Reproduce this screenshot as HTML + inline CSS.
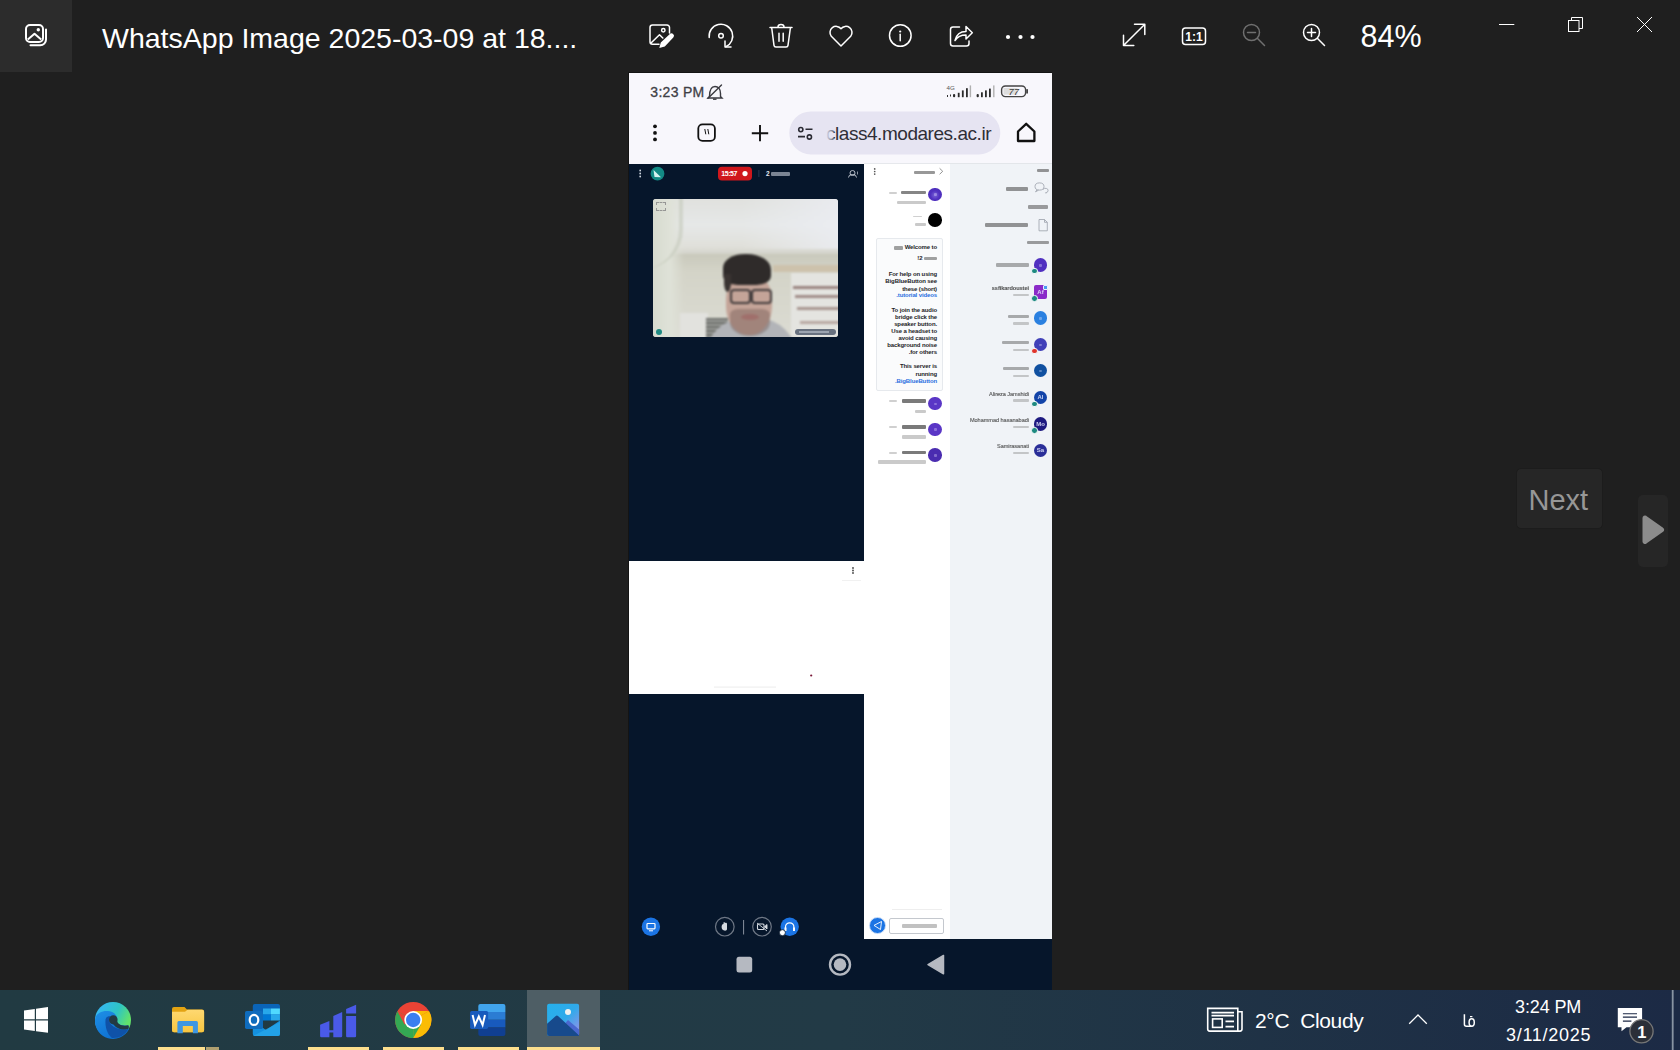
<!DOCTYPE html>
<html><head><meta charset="utf-8">
<style>
*{margin:0;padding:0;box-sizing:border-box}
html,body{width:1680px;height:1050px;overflow:hidden;background:#1f1f1f;font-family:"Liberation Sans",sans-serif}
.a{position:absolute}
#tile{left:0;top:0;width:72px;height:72px;background:#2c2c2c}
#title{left:102px;top:19.5px;color:#fff;font-size:28.5px;white-space:nowrap;line-height:36px}
svg.ic{position:absolute;overflow:visible}
.sq{display:inline-block;transform-origin:100% 50%}
.ib{display:inline-block;height:3.4px;background:#333;opacity:.45;border-radius:1px;vertical-align:-0.3px;filter:blur(0.35px)}
#phone{left:629px;top:73px;width:423px;height:917px;background:#06162b;overflow:hidden}
#taskbar{left:0;top:990px;width:1680px;height:60px;background:linear-gradient(90deg,#213a42 0%,#223a46 50%,#1c2a45 100%)}
</style></head><body>
<div id="tile" class="a"></div>
<svg class="ic" style="left:0;top:0" width="72" height="72" viewBox="0 0 72 72">
 <g fill="none" stroke="#fff" stroke-width="2">
  <rect x="26" y="25" width="17" height="17" rx="4"/>
  <path d="M27.8 39.6 L34.5 33.8 L41.2 39.6" stroke-linejoin="round"/>
  <path d="M46 29.5 V39.5 a5.8 5.8 0 0 1 -5.8 5.8 H30.5" stroke-linecap="round"/>
 </g>
 <circle cx="38.3" cy="29.7" r="1.7" fill="#fff"/>
</svg>
<div id="title" class="a">WhatsApp Image 2025-03-09 at 18....</div>


<svg class="ic" style="left:0;top:0" width="1680" height="72" viewBox="0 0 1680 72">
 <g fill="none" stroke="#fff" stroke-width="1.5" stroke-linecap="round" stroke-linejoin="round">
  <!-- edit -->
  <path d="M659 44.3 H652.5 a2.5 2.5 0 0 1 -2.5 -2.5 V27.5 a2.5 2.5 0 0 1 2.5 -2.5 H667 a2.5 2.5 0 0 1 2.5 2.5 V33"/>
  <path d="M651 43 L659.5 34.8 L662.8 38"/>
  <circle cx="663.3" cy="30.3" r="1.7"/>
  <!-- rotate -->
  <path d="M709.2 37.5 A11.8 11.8 0 1 1 725.8 46.8"/>
  <path d="M725 41 V46.9 H731"/>
  <circle cx="721" cy="35.8" r="2.3"/>
  <!-- trash -->
  <path d="M770 27.6 H792"/>
  <path d="M778 27 a3 2.5 0 0 1 6 0"/>
  <path d="M771.8 28.5 L774 45.3 a2 2 0 0 0 2 1.8 H786 a2 2 0 0 0 2 -1.8 L790.3 28.5"/>
  <path d="M779 33.3 V41.3 M783.2 33.3 V41.3"/>
  <!-- heart -->
  <path d="M841 46 L831.3 36.3 A5.6 5.6 0 0 1 841 28.7 A5.6 5.6 0 0 1 850.7 36.3 Z"/>
  <!-- info -->
  <circle cx="900.3" cy="35.5" r="10.8"/>
  <path d="M900.2 34.3 V40.8"/>
  <!-- share -->
  <path d="M959.5 27 H953 a2.5 2.5 0 0 0 -2.5 2.5 V43.5 a2.5 2.5 0 0 0 2.5 2.5 H966.5 a2.5 2.5 0 0 0 2.5 -2.5 V41"/>
  <path d="M955 40.5 C956.5 34 960.5 31.5 966 31.5 V26.5 L972.3 32.8 L966 39 V35 C961 35 957.5 36.5 955 40.5 Z"/>
  <!-- expand -->
  <path d="M1123.5 45.5 L1144.8 24.3 M1134.5 24.3 H1144.8 V34.6 M1123.5 35.2 V45.5 H1133.8"/>
  <!-- 1:1 -->
  <rect x="1182.5" y="28" width="23" height="16.5" rx="3"/>
  <!-- zoom in -->
  <circle cx="1311.5" cy="32.5" r="8"/>
  <path d="M1317.3 38.3 L1324.5 45.5 M1307.5 32.5 H1315.5 M1311.5 28.5 V36.5"/>
 </g>
 <g fill="none" stroke="#6f6f6f" stroke-width="1.5" stroke-linecap="round">
  <circle cx="1251.5" cy="32.5" r="8"/>
  <path d="M1257.3 38.3 L1264.5 45.5 M1247.5 32.5 H1255.5"/>
 </g>
 <g fill="#fff">
  <path d="M659.3 48 L660.8 42.6 L669.6 34.2 A2.5 2.5 0 0 1 673.3 37.6 L664.8 46.4 Z"/>
  <circle cx="900.2" cy="31.5" r="1.1"/>
  <circle cx="1008" cy="37" r="2.1"/><circle cx="1020.5" cy="37" r="2.1"/><circle cx="1032.5" cy="37" r="2.1"/>
 </g>
 <text x="1194" y="41.3" fill="#fff" font-size="12" font-weight="bold" text-anchor="middle" font-family="Liberation Sans">1:1</text>
 <g fill="none" stroke="#fff" stroke-width="1">
  <path d="M1499 24.5 H1514.3"/>
  <path d="M1571.5 21 V17.5 H1582.5 V28.5 H1579"/>
  <rect x="1568.5" y="20.5" width="10.5" height="11"/>
  <path d="M1637 17 L1652 32 M1652 17 L1637 32"/>
 </g>
</svg>
<div class="a" style="left:1360.5px;top:17.5px;color:#fff;font-size:30.5px;line-height:36px">84%</div>

<div class="a" style="left:628px;top:72px;width:424px;height:1px;background:#141414"></div>
<div class="a" style="left:628px;top:72px;width:1px;height:918px;background:#141414"></div>
<div id="phone" class="a">
 <!-- status + browser bar -->
 <div class="a" style="left:0;top:0;width:423px;height:91px;background:#f8f7fc"></div>
 <div class="a" style="left:21.3px;top:10px;font-size:14px;line-height:18px;color:#404046;letter-spacing:0.3px;-webkit-text-stroke:0.3px #404046">3:23 PM</div>
 <svg class="ic" style="left:0;top:0" width="423" height="91" viewBox="0 0 423 91">
  <g fill="none" stroke="#3a3a40" stroke-width="1.4" stroke-linecap="round">
   <path d="M80.5 23.5 C80.5 16 83.5 13.5 86 13.5 C89 13.5 91.5 16 91.5 20.5 V23.5 L93 25 H79 Z" />
   <path d="M79 25.3 L92.5 12"/>
  </g>
  <rect x="84" y="25.5" width="3.5" height="1.4" fill="#3a3a40"/>
  <!-- 4G signal -->
  <text x="317.5" y="16.5" font-size="6.2" fill="#555" font-family="Liberation Sans">4G</text>
  <path d="M318.5 22 V24 M321.5 21.5 V23.5" stroke="#333" stroke-width="1"/>
  <g fill="#2b2b2b">
   <rect x="324" y="21" width="2.2" height="3.2" rx="1"/><rect x="328.8" y="19.8" width="1.8" height="4.4"/><rect x="332.9" y="17.4" width="1.8" height="6.8"/><rect x="337" y="15.2" width="1.8" height="9"/>
   <rect x="347.6" y="21" width="2.2" height="3.2" rx="1"/><rect x="352" y="19.3" width="1.8" height="4.9"/><rect x="356" y="17.4" width="1.8" height="6.8"/><rect x="360" y="15.6" width="1.8" height="8.6"/>
  </g>
  <rect x="340.7" y="12.4" width="1.4" height="11.8" fill="#b0b0b0"/>
  <rect x="364.1" y="12.4" width="1.4" height="11.8" fill="#b0b0b0"/>
  <rect x="372.6" y="13" width="24" height="10.6" rx="3.8" fill="none" stroke="#444" stroke-width="1.4"/>
  <rect x="374.5" y="15" width="14" height="6.6" fill="#ddd"/>
  <rect x="397.2" y="16.2" width="1.8" height="4.3" fill="#444"/>
  <text x="384.8" y="21.8" font-size="9.5" fill="#3a3a3a" font-style="italic" text-anchor="middle" font-family="Liberation Sans">77</text>
  <!-- browser toolbar -->
  <g fill="#111">
   <circle cx="26" cy="53.3" r="1.9"/><circle cx="26" cy="59.9" r="1.9"/><circle cx="26" cy="66.4" r="1.9"/>
  </g>
  <rect x="69.3" y="51.3" width="16.6" height="16.6" rx="4.2" fill="none" stroke="#111" stroke-width="1.8"/>
  <path d="M75.8 56 L76.8 61.3 M78.8 56 L79.8 61.3" stroke="#111" stroke-width="1" fill="none"/>
  <path d="M131 52 V68.3 M122.8 60.2 H139.2" stroke="#111" stroke-width="1.9" fill="none"/>
  <rect x="160.3" y="38.4" width="211" height="43" rx="21.5" fill="#e6e4f2"/>
  <g fill="none" stroke="#2a2a33" stroke-width="1.6">
   <circle cx="171.8" cy="56.6" r="2.1"/><path d="M176.5 56.3 H183.5 M169 63.6 H176"/><circle cx="180.4" cy="64" r="2.1"/>
  </g>
  <path d="M389 58.5 L397.2 50.8 L405.4 58.5 V68 H389 Z" fill="none" stroke="#111" stroke-width="2.3" stroke-linejoin="round"/>
 </svg>
 <div class="a" style="left:197px;top:50px;font-size:19px;line-height:22px;color:#2e2e36;white-space:nowrap;letter-spacing:-0.46px">class4.modares.ac.ir</div>
 <div class="a" style="left:195px;top:48px;width:10px;height:26px;background:linear-gradient(90deg,#e6e4f2 20%,rgba(230,228,242,0.3))"></div>
 <!-- web content -->
 <div class="a" style="left:0;top:91px;width:235px;height:397px;background:#06162b"></div>
 <div class="a" style="left:0;top:488px;width:235px;height:133px;background:#fff"></div>
 <div class="a" style="left:0;top:621px;width:235px;height:245px;background:#06162b"></div>
 <div class="a" style="left:235px;top:91px;width:86px;height:775px;background:#fff"></div>
 <div class="a" style="left:321px;top:91px;width:102px;height:775px;background:#f0f3f7"></div>
 <div class="a" style="left:0;top:866px;width:423px;height:51px;background:#06162b"></div>

<svg class="ic" style="left:0;top:0" width="423" height="917" viewBox="629 73 423 917"><g fill="#555"><circle cx="874.7" cy="168.9" r="0.85"/><circle cx="874.7" cy="171.5" r="0.85"/><circle cx="874.7" cy="174.1" r="0.85"/></g><path d="M939.6 168.3 L942.7 171.3 L939.6 174.3" fill="none" stroke="#777" stroke-width="0.8"/><g fill="none" stroke="#9aa0aa" stroke-width="0.8"><ellipse cx="1039.5" cy="186.5" rx="4.5" ry="3.6"/><path d="M1037 189.8 L1035.5 191.8 L1038.5 190.2"/><path d="M1043.2 189.5 a2.6 2.2 0 1 1 2.3 3.2 L1046 193.5"/><path d="M1039 219.5 H1044.5 L1047.3 222.3 V230.8 H1039 Z"/><path d="M1044.5 219.5 V222.3 H1047.3"/></g></svg>
<div class="a" style="left:235.0px;top:90.0px;width:86.0px;height:0.8px;background:#e6e8ec;opacity:1;border-radius:0px;filter:blur(0px)"></div>
<div class="a" style="left:321.0px;top:90.0px;width:102.0px;height:0.8px;background:#e3e6ea;opacity:1;border-radius:0px;filter:blur(0px)"></div>
<div class="a" style="left:285.3px;top:97.5px;width:20.5px;height:3.4px;background:#555;opacity:0.6;border-radius:1px;filter:blur(0.35px)"></div>
<div class="a" style="left:299.4px;top:114.5px;width:13.7px;height:13.7px;border-radius:50%;background:radial-gradient(circle at 50% 55%,#7a64d8 0,#5030c0 45%,#4a2cb8 100%);"></div>
<div class="a" style="left:305.0px;top:120.2px;width:2.8px;height:2.6px;background:#e8e0ff;opacity:0.35;border-radius:1px;filter:blur(0.4px)"></div>
<div class="a" style="left:272.0px;top:117.7px;width:24.7px;height:3.6px;background:#222;opacity:0.55;border-radius:1px;filter:blur(0.35px)"></div>
<div class="a" style="left:260.0px;top:119.0px;width:8.0px;height:1.8px;background:#999;opacity:0.45;border-radius:1px;filter:blur(0.35px)"></div>
<div class="a" style="left:267.7px;top:127.6px;width:29.0px;height:3.2px;background:#777;opacity:0.38;border-radius:1px;filter:blur(0.35px)"></div>
<div class="a" style="left:299.4px;top:140.0px;width:13.7px;height:13.7px;border-radius:50%;background:#000;"></div>
<div class="a" style="left:283.7px;top:142.5px;width:9.2px;height:1.8px;background:#999;opacity:0.45;border-radius:1px;filter:blur(0.35px)"></div>
<div class="a" style="left:285.6px;top:150.1px;width:11.1px;height:3.2px;background:#777;opacity:0.38;border-radius:1px;filter:blur(0.35px)"></div>
<div class="a" style="left:247.3px;top:164.5px;width:67px;height:153.5px;border:0.8px solid #e6e9ed;background:#fafbfc;border-radius:2px"></div>
<div class="a" style="right:115.0px;top:171.3px;font-size:6.0px;line-height:7.20px;color:#1e1e28;font-weight:bold;white-space:nowrap;letter-spacing:-0.12px;opacity:1;-webkit-text-stroke:0px #1e1e28"><i class="ib" style="width:9px"></i> Welcome to</div>
<div class="a" style="right:115.0px;top:182.0px;font-size:6.0px;line-height:7.20px;color:#1e1e28;font-weight:bold;white-space:nowrap;letter-spacing:-0.12px;opacity:1;-webkit-text-stroke:0px #1e1e28">!2 <i class="ib" style="width:13px"></i></div>
<div class="a" style="right:115.0px;top:197.6px;font-size:6.0px;line-height:7.20px;color:#1e1e28;font-weight:bold;white-space:nowrap;letter-spacing:-0.12px;opacity:1;-webkit-text-stroke:0px #1e1e28">For help on using</div>
<div class="a" style="right:115.0px;top:205.2px;font-size:6.0px;line-height:7.20px;color:#1e1e28;font-weight:bold;white-space:nowrap;letter-spacing:-0.12px;opacity:1;-webkit-text-stroke:0px #1e1e28">BigBlueButton see</div>
<div class="a" style="right:115.0px;top:212.5px;font-size:6.0px;line-height:7.20px;color:#1e1e28;font-weight:bold;white-space:nowrap;letter-spacing:-0.12px;opacity:1;-webkit-text-stroke:0px #1e1e28">these (short)</div>
<div class="a" style="right:115.0px;top:219.3px;font-size:6.0px;line-height:7.20px;color:#2a6fe0;font-weight:bold;white-space:nowrap;letter-spacing:-0.12px;opacity:1;-webkit-text-stroke:0px #2a6fe0">.tutorial videos</div>
<div class="a" style="right:115.0px;top:233.6px;font-size:6.0px;line-height:7.20px;color:#1e1e28;font-weight:bold;white-space:nowrap;letter-spacing:-0.12px;opacity:1;-webkit-text-stroke:0px #1e1e28">To join the audio</div>
<div class="a" style="right:115.0px;top:240.8px;font-size:6.0px;line-height:7.20px;color:#1e1e28;font-weight:bold;white-space:nowrap;letter-spacing:-0.12px;opacity:1;-webkit-text-stroke:0px #1e1e28">bridge click the</div>
<div class="a" style="right:115.0px;top:247.8px;font-size:6.0px;line-height:7.20px;color:#1e1e28;font-weight:bold;white-space:nowrap;letter-spacing:-0.12px;opacity:1;-webkit-text-stroke:0px #1e1e28">speaker button.</div>
<div class="a" style="right:115.0px;top:255.0px;font-size:6.0px;line-height:7.20px;color:#1e1e28;font-weight:bold;white-space:nowrap;letter-spacing:-0.12px;opacity:1;-webkit-text-stroke:0px #1e1e28">Use a headset to</div>
<div class="a" style="right:115.0px;top:262.3px;font-size:6.0px;line-height:7.20px;color:#1e1e28;font-weight:bold;white-space:nowrap;letter-spacing:-0.12px;opacity:1;-webkit-text-stroke:0px #1e1e28">avoid causing</div>
<div class="a" style="right:115.0px;top:269.2px;font-size:6.0px;line-height:7.20px;color:#1e1e28;font-weight:bold;white-space:nowrap;letter-spacing:-0.12px;opacity:1;-webkit-text-stroke:0px #1e1e28">background noise</div>
<div class="a" style="right:115.0px;top:276.4px;font-size:6.0px;line-height:7.20px;color:#1e1e28;font-weight:bold;white-space:nowrap;letter-spacing:-0.12px;opacity:1;-webkit-text-stroke:0px #1e1e28">.for others</div>
<div class="a" style="right:115.0px;top:290.1px;font-size:6.0px;line-height:7.20px;color:#1e1e28;font-weight:bold;white-space:nowrap;letter-spacing:-0.12px;opacity:1;-webkit-text-stroke:0px #1e1e28">This server is</div>
<div class="a" style="right:115.0px;top:297.5px;font-size:6.0px;line-height:7.20px;color:#1e1e28;font-weight:bold;white-space:nowrap;letter-spacing:-0.12px;opacity:1;-webkit-text-stroke:0px #1e1e28">running</div>
<div class="a" style="right:115.0px;top:304.7px;font-size:6.0px;line-height:7.20px;color:#2a6fe0;font-weight:bold;white-space:nowrap;letter-spacing:-0.12px;opacity:1;-webkit-text-stroke:0px #2a6fe0">.BigBlueButton</div>
<div class="a" style="left:299.4px;top:323.8px;width:13.7px;height:13.7px;border-radius:50%;background:#5a36c6;"></div>
<div class="a" style="left:305.0px;top:329.6px;width:2.8px;height:2.6px;background:#e8e0ff;opacity:0.35;border-radius:1px;filter:blur(0.4px)"></div>
<div class="a" style="left:273.0px;top:326.2px;width:24.0px;height:3.6px;background:#222;opacity:0.6;border-radius:1px;filter:blur(0.35px)"></div>
<div class="a" style="left:260.0px;top:327.4px;width:7.8px;height:1.8px;background:#999;opacity:0.45;border-radius:1px;filter:blur(0.35px)"></div>
<div class="a" style="left:285.8px;top:336.8px;width:11.2px;height:3.2px;background:#777;opacity:0.38;border-radius:1px;filter:blur(0.35px)"></div>
<div class="a" style="left:299.4px;top:349.5px;width:13.7px;height:13.7px;border-radius:50%;background:#5a36c6;"></div>
<div class="a" style="left:305.0px;top:355.3px;width:2.8px;height:2.6px;background:#e8e0ff;opacity:0.35;border-radius:1px;filter:blur(0.4px)"></div>
<div class="a" style="left:273.0px;top:352.0px;width:24.0px;height:3.6px;background:#222;opacity:0.6;border-radius:1px;filter:blur(0.35px)"></div>
<div class="a" style="left:260.0px;top:353.2px;width:7.8px;height:1.8px;background:#999;opacity:0.45;border-radius:1px;filter:blur(0.35px)"></div>
<div class="a" style="left:273.0px;top:362.4px;width:24.0px;height:3.2px;background:#777;opacity:0.38;border-radius:1px;filter:blur(0.35px)"></div>
<div class="a" style="left:299.4px;top:375.2px;width:13.7px;height:13.7px;border-radius:50%;background:#4a2cb0;"></div>
<div class="a" style="left:305.0px;top:381.0px;width:2.8px;height:2.6px;background:#e8e0ff;opacity:0.35;border-radius:1px;filter:blur(0.4px)"></div>
<div class="a" style="left:273.0px;top:377.7px;width:24.0px;height:3.6px;background:#222;opacity:0.6;border-radius:1px;filter:blur(0.35px)"></div>
<div class="a" style="left:260.0px;top:378.9px;width:7.8px;height:1.8px;background:#999;opacity:0.45;border-radius:1px;filter:blur(0.35px)"></div>
<div class="a" style="left:249.0px;top:387.4px;width:48.0px;height:3.2px;background:#777;opacity:0.38;border-radius:1px;filter:blur(0.35px)"></div>
<div class="a" style="left:408.0px;top:95.7px;width:11.5px;height:3.2px;background:#444;opacity:0.55;border-radius:1px;filter:blur(0.35px)"></div>
<div class="a" style="left:376.7px;top:114.4px;width:22.3px;height:3.4px;background:#444;opacity:0.55;border-radius:1px;filter:blur(0.35px)"></div>
<div class="a" style="left:398.6px;top:132.4px;width:20.9px;height:3.4px;background:#444;opacity:0.5;border-radius:1px;filter:blur(0.35px)"></div>
<div class="a" style="left:355.7px;top:150.4px;width:43.7px;height:3.4px;background:#444;opacity:0.55;border-radius:1px;filter:blur(0.35px)"></div>
<div class="a" style="left:398.0px;top:168.0px;width:21.5px;height:3.4px;background:#444;opacity:0.5;border-radius:1px;filter:blur(0.35px)"></div>
<div class="a" style="left:404.7px;top:185.0px;width:13.7px;height:13.7px;border-radius:50%;background:#5030c0;"></div>
<div class="a" style="left:410.0px;top:190.8px;width:3.2px;height:2.8px;background:#e8ecff;opacity:0.35;border-radius:1px;filter:blur(0.4px)"></div>
<div class="a" style="left:366.6px;top:190.4px;width:33.4px;height:3.2px;background:#444;opacity:0.42;border-radius:1px;filter:blur(0.35px)"></div>
<div class="a" style="left:402.0px;top:194.9px;width:6.6px;height:6.6px;border-radius:50%;background:#1e8a80;border:0.8px solid #f4f8fb;box-sizing:border-box"></div>
<div class="a" style="left:404.7px;top:212.3px;width:13.6px;height:13.6px;border-radius:2px;background:#8a2ac8"></div>
<div class="a" style="left:414.3px;top:211.5px;width:5px;height:5px;border-radius:1px;background:#4a9af0;border:0.6px solid #e8f0ff"></div>
<div class="a" style="left:404.6px;top:215.6px;width:13.8px;text-align:center;font-size:6px;line-height:7px;color:#e8ecff;font-weight:bold;opacity:.85">Af</div>
<div class="a" style="right:23.0px;top:211.9px;font-size:5.6px;line-height:6.72px;color:#333;font-weight:bold;white-space:nowrap;letter-spacing:-0.05px;opacity:0.8;-webkit-text-stroke:0.15px #333">ssfikardoustei</div>
<div class="a" style="left:383.5px;top:220.9px;width:16.5px;height:2.6px;background:#666;opacity:0.32;border-radius:1px;filter:blur(0.35px)"></div>
<div class="a" style="left:402.0px;top:222.1px;width:6.6px;height:6.6px;border-radius:50%;background:#1e8a80;border:0.8px solid #f4f8fb;box-sizing:border-box"></div>
<div class="a" style="left:404.7px;top:238.2px;width:13.7px;height:13.7px;border-radius:50%;background:#2a80e0;"></div>
<div class="a" style="left:410.0px;top:244.0px;width:3.2px;height:2.8px;background:#e8ecff;opacity:0.35;border-radius:1px;filter:blur(0.4px)"></div>
<div class="a" style="left:379.3px;top:241.6px;width:20.7px;height:3.2px;background:#444;opacity:0.42;border-radius:1px;filter:blur(0.35px)"></div>
<div class="a" style="left:383.5px;top:249.3px;width:16.5px;height:2.6px;background:#666;opacity:0.32;border-radius:1px;filter:blur(0.35px)"></div>
<div class="a" style="left:404.7px;top:264.8px;width:13.7px;height:13.7px;border-radius:50%;background:#4040b8;"></div>
<div class="a" style="left:410.0px;top:270.6px;width:3.2px;height:2.8px;background:#e8ecff;opacity:0.35;border-radius:1px;filter:blur(0.4px)"></div>
<div class="a" style="left:372.5px;top:267.6px;width:27.5px;height:3.2px;background:#444;opacity:0.42;border-radius:1px;filter:blur(0.35px)"></div>
<div class="a" style="left:383.5px;top:275.9px;width:16.5px;height:2.6px;background:#666;opacity:0.32;border-radius:1px;filter:blur(0.35px)"></div>
<div class="a" style="left:402.0px;top:274.6px;width:6.6px;height:6.6px;border-radius:50%;background:#e0352b;border:0.8px solid #f4f8fb;box-sizing:border-box"></div>
<div class="a" style="left:404.7px;top:290.8px;width:13.7px;height:13.7px;border-radius:50%;background:#1050a0;"></div>
<div class="a" style="left:410.0px;top:296.6px;width:3.2px;height:2.8px;background:#e8ecff;opacity:0.35;border-radius:1px;filter:blur(0.4px)"></div>
<div class="a" style="left:373.7px;top:294.2px;width:26.3px;height:3.2px;background:#444;opacity:0.42;border-radius:1px;filter:blur(0.35px)"></div>
<div class="a" style="left:383.5px;top:301.7px;width:16.5px;height:2.6px;background:#666;opacity:0.32;border-radius:1px;filter:blur(0.35px)"></div>
<div class="a" style="left:404.7px;top:317.6px;width:13.7px;height:13.7px;border-radius:50%;background:#1344a8;"></div>
<div class="a" style="left:404.6px;top:321.0px;width:13.8px;text-align:center;font-size:6px;line-height:7px;color:#e8ecff;font-weight:bold;opacity:.85">Al</div>
<div class="a" style="right:23.0px;top:317.6px;font-size:5.6px;line-height:6.72px;color:#333;font-weight:normal;white-space:nowrap;letter-spacing:-0.05px;opacity:0.8;-webkit-text-stroke:0.15px #333">Alireza Jamshidi</div>
<div class="a" style="left:383.5px;top:326.1px;width:16.5px;height:2.6px;background:#666;opacity:0.32;border-radius:1px;filter:blur(0.35px)"></div>
<div class="a" style="left:402.0px;top:327.5px;width:6.6px;height:6.6px;border-radius:50%;background:#1e8a80;border:0.8px solid #f4f8fb;box-sizing:border-box"></div>
<div class="a" style="left:404.7px;top:344.3px;width:13.7px;height:13.7px;border-radius:50%;background:#1e1a80;"></div>
<div class="a" style="left:404.6px;top:347.7px;width:13.8px;text-align:center;font-size:6px;line-height:7px;color:#e8ecff;font-weight:bold;opacity:.85">Mo</div>
<div class="a" style="right:23.0px;top:343.8px;font-size:5.6px;line-height:6.72px;color:#333;font-weight:normal;white-space:nowrap;letter-spacing:-0.05px;opacity:0.8;-webkit-text-stroke:0.15px #333">Mohammad hasanabadi</div>
<div class="a" style="left:383.5px;top:352.5px;width:16.5px;height:2.6px;background:#666;opacity:0.32;border-radius:1px;filter:blur(0.35px)"></div>
<div class="a" style="left:402.0px;top:354.2px;width:6.6px;height:6.6px;border-radius:50%;background:#1e8a80;border:0.8px solid #f4f8fb;box-sizing:border-box"></div>
<div class="a" style="left:404.7px;top:370.5px;width:13.7px;height:13.7px;border-radius:50%;background:#2a2e98;"></div>
<div class="a" style="left:404.6px;top:373.9px;width:13.8px;text-align:center;font-size:6px;line-height:7px;color:#e8ecff;font-weight:bold;opacity:.85">Sa</div>
<div class="a" style="right:23.0px;top:370.3px;font-size:5.6px;line-height:6.72px;color:#333;font-weight:normal;white-space:nowrap;letter-spacing:-0.05px;opacity:0.8;-webkit-text-stroke:0.15px #333">Samirasanati</div>
<div class="a" style="left:383.5px;top:378.7px;width:16.5px;height:2.6px;background:#666;opacity:0.32;border-radius:1px;filter:blur(0.35px)"></div>
<div class="a" style="left:263.0px;top:836.3px;width:50.0px;height:0.6px;background:#eee;opacity:1;border-radius:0px;filter:blur(0px)"></div>
<div class="a" style="left:240.2px;top:844.1px;width:16.6px;height:16.6px;border-radius:50%;background:#1b74e4;border:1.2px solid #cfe0f8;box-sizing:border-box"></div>
<svg class="ic" style="left:0;top:0" width="423" height="917" viewBox="629 73 423 917"><path d="M874 925.4 L881.5 921.5 L880.5 929.5 Z" fill="none" stroke="#fff" stroke-width="0.9"/></svg>
<div class="a" style="left:260px;top:844.5px;width:54.5px;height:16.5px;border:0.8px solid #c4c8ce;border-radius:2px;background:#fff"></div>
<div class="a" style="left:272.5px;top:851.0px;width:35.5px;height:3.5px;background:#666;opacity:0.4;border-radius:1px;filter:blur(0.35px)"></div>
 <!-- meeting top bar -->
 <svg class="ic" style="left:0;top:91px" width="235" height="30" viewBox="0 91 235 30">
  <g fill="#cfd6e0"><circle cx="11.2" cy="97.5" r="0.9"/><circle cx="11.2" cy="100.5" r="0.9"/><circle cx="11.2" cy="103.5" r="0.9"/></g>
  <circle cx="28.5" cy="100.7" r="6.9" fill="#138a85"/>
  <path d="M24.5 97 L25.5 104 L32 104.3 Z" fill="#d8f3f0"/>
  <rect x="89" y="93.7" width="34" height="13.8" rx="4" fill="#d0171c"/>
  <text x="92.3" y="103.2" font-size="7" fill="#fff" font-weight="bold" font-family="Liberation Sans" letter-spacing="-0.45">15:57</text>
  <circle cx="116" cy="100.6" r="2.6" fill="#fff"/>
  <rect x="129.5" y="97" width="0.8" height="7" fill="#33405a"/>
  <rect x="221" y="97.5" width="5" height="5" rx="2.5" fill="none" stroke="#c8ced8" stroke-width="0.9"/>
  <path d="M219.5 104.5 a4 3 0 0 1 8 0" fill="none" stroke="#c8ced8" stroke-width="0.9"/>
  <path d="M228.5 98.5 V101.5" stroke="#c8ced8" stroke-width="0.7"/>
 </svg>
 <div class="a" style="left:137px;top:96.5px;width:30px;height:7px;color:#e8ecf2;font-size:6.5px;line-height:7px;font-weight:bold;white-space:nowrap">2 <span style="display:inline-block;width:19px;height:4px;background:#c9d0da;opacity:.6;border-radius:1px;vertical-align:-0.3px;filter:blur(0.4px)"></span></div>
 <!-- video -->
 <div class="a" style="left:24px;top:126px;width:185px;height:138px;border-radius:3px;overflow:hidden;background:#d8d8d0">
  <div class="a" style="left:0;top:0;width:185px;height:138px;filter:blur(1.3px)">
   <div class="a" style="left:-5px;top:-5px;width:195px;height:62px;background:linear-gradient(180deg,#dfe0dc 0%,#e6e8e8 50%,#e0e0da 85%,#cfcfc6 100%)"></div>
   <div class="a" style="left:90px;top:-5px;width:100px;height:55px;background:linear-gradient(90deg,rgba(236,238,242,0),rgba(236,238,244,0.8))"></div>
   <div class="a" style="left:-5px;top:55px;width:195px;height:90px;background:linear-gradient(180deg,#c9c9bc 0%,#d4d4c8 20%,#d8d8ce 60%,#dcdcd4 100%)"></div>
   <div class="a" style="left:-5px;top:0;width:36px;height:145px;background:linear-gradient(90deg,#d4d8cc,#dfe2d8 60%,rgba(220,222,214,0))"></div>
   <div class="a" style="left:-10px;top:-10px;width:40px;height:80px;border-right:4px solid rgba(190,195,180,.5);border-radius:0 0 60px 0"></div>
   <div class="a" style="left:120px;top:66px;width:70px;height:7px;background:#cdc2ac"></div>
   <div class="a" style="left:138px;top:74px;width:50px;height:64px;background:#e4e4e0"></div>
   <div class="a" style="left:140px;top:87px;width:48px;height:3px;background:#9a8480"></div>
   <div class="a" style="left:142px;top:96px;width:46px;height:3px;background:#a08c88"></div>
   <div class="a" style="left:144px;top:108px;width:44px;height:2.5px;background:#a89690"></div>
   <div class="a" style="left:147px;top:122px;width:41px;height:2.5px;background:#b8a8a2"></div>
   <div class="a" style="left:27px;top:114px;width:28px;height:30px;background:#e2e2de"></div>
   <div class="a" style="left:53px;top:119px;width:22px;height:25px;background:repeating-linear-gradient(180deg,#6e706c 0 2px,#9a9c98 2px 4px)"></div>
   <div class="a" style="left:52px;top:119px;width:92px;height:40px;border-radius:40px 40px 0 0;background:#b2b4b8"></div>
   <div class="a" style="left:73px;top:76px;width:46px;height:60px;border-radius:40% 40% 48% 48%;background:#c4a498"></div>
   <div class="a" style="left:77px;top:110px;width:40px;height:27px;border-radius:20% 20% 50% 50%;background:#6e5650;opacity:.4"></div>
   <div class="a" style="left:88px;top:115px;width:18px;height:6px;border-radius:50%;background:#a06a68;opacity:.8"></div>
   <div class="a" style="left:70px;top:55px;width:48px;height:31px;border-radius:45% 50% 30% 30%;background:#2f2b2a"></div>
   <div class="a" style="left:71px;top:75px;width:7px;height:18px;border-radius:0 0 50% 50%;background:#3a3432"></div>
   <div class="a" style="left:77px;top:90px;width:21px;height:15px;border:2.2px solid #423c3c;border-radius:4px"></div>
   <div class="a" style="left:98px;top:90px;width:21px;height:15px;border:2.2px solid #423c3c;border-radius:4px"></div>
  </div>
  <div class="a" style="left:3px;top:3px;width:10px;height:9px;border:1.2px dashed #8a8a8a;opacity:.85"></div>
  <div class="a" style="left:2.5px;top:130px;width:6px;height:6px;border-radius:50%;background:#1e8a82"></div>
  <div class="a" style="left:142px;top:129.5px;width:41px;height:6.5px;border-radius:3px;background:#5a6474;opacity:.9"></div>
  <div class="a" style="left:146px;top:131.5px;width:30px;height:2.5px;background:#c0c6d0;opacity:.6"></div>
 </div>
 <!-- presentation white area -->
 <svg class="ic" style="left:0;top:488px" width="235" height="133" viewBox="0 488 235 133">
  <g fill="#444"><circle cx="224" cy="495" r="0.9"/><circle cx="224" cy="497.5" r="0.9"/><circle cx="224" cy="500" r="0.9"/></g>
  <rect x="213" y="507" width="19" height="0.8" fill="#eee"/>
  <circle cx="182.2" cy="602.5" r="1.1" fill="#7a1838"/>
  <rect x="85" y="613.5" width="62" height="1.2" fill="#f0f0f0"/>
 </svg>
 <!-- bottom controls -->
 <svg class="ic" style="left:0;top:840px" width="423" height="77" viewBox="0 840 423 77">
  <circle cx="21.9" cy="853.7" r="9.2" fill="#1b74e4"/>
  <rect x="18" y="850.5" width="8" height="5.3" rx="0.8" fill="none" stroke="#fff" stroke-width="1.2"/>
  <path d="M20 857.8 H24" stroke="#fff" stroke-width="1"/>
  <circle cx="95.8" cy="853.7" r="9.3" fill="none" stroke="#6e7785" stroke-width="1.2"/>
  <path d="M93 856 C92 853 93 851 94.5 851 V849.5 C95 849 96 849 96.2 850 C97 849.5 98 850 98 851 V856 C98 858 95 858.5 93 856Z" fill="#d6dbe2"/>
  <rect x="114" y="847" width="1.1" height="14.5" fill="#7c8594"/>
  <circle cx="133" cy="853.7" r="9.3" fill="none" stroke="#6e7785" stroke-width="1.2"/>
  <rect x="128.5" y="851" width="6.5" height="5.5" rx="1" fill="none" stroke="#d6dbe2" stroke-width="1.1"/>
  <path d="M135.5 853.7 L138 851.5 V856 Z M128 850 L138 858" fill="#d6dbe2" stroke="#d6dbe2" stroke-width="0.9"/>
  <circle cx="160.7" cy="853.7" r="9.2" fill="#1b74e4"/>
  <path d="M156.5 856.5 V854 a4.2 4.2 0 0 1 8.4 0 V856.5" fill="none" stroke="#fff" stroke-width="1.2"/>
  <rect x="155.5" y="854.5" width="2" height="3.5" fill="#fff"/><rect x="164" y="854.5" width="2" height="3.5" fill="#fff"/>
  <circle cx="153.4" cy="859.7" r="3" fill="#fff" stroke="#06162b" stroke-width="0.8"/>
  <!-- nav bar -->
  <rect x="107.5" y="883.8" width="15.7" height="15.7" rx="2.5" fill="#b5b9c1"/>
  <circle cx="211" cy="891.6" r="10" fill="none" stroke="#b5b9c1" stroke-width="2.4"/>
  <circle cx="211" cy="891.6" r="6.3" fill="#b5b9c1"/>
  <path d="M314.5 882.5 V900.8 L299 891.6 Z" fill="#b5b9c1" stroke="#b5b9c1" stroke-width="1.5" stroke-linejoin="round"/>
 </svg>
</div>
<div id="taskbar" class="a">
 <div class="a" style="left:527px;top:0;width:73px;height:60px;background:#4e5e65"></div>
 <div class="a" style="left:158px;top:57px;width:47px;height:3px;background:#fddf8e"></div>
 <div class="a" style="left:206px;top:57px;width:13px;height:3px;background:#b0a070"></div>
 <div class="a" style="left:308px;top:57px;width:61px;height:3px;background:#fddf8e"></div>
 <div class="a" style="left:383px;top:57px;width:61px;height:3px;background:#fddf8e"></div>
 <div class="a" style="left:458px;top:57px;width:61px;height:3px;background:#fddf8e"></div>
 <div class="a" style="left:527px;top:57px;width:73px;height:3px;background:#fddf8e"></div>
 <svg class="ic" style="left:0;top:0" width="1680" height="60" viewBox="0 990 1680 60">
  <defs>
   <linearGradient id="eg1" x1="0.1" y1="0.2" x2="0.9" y2="0.6"><stop offset="0" stop-color="#35b8f0"/><stop offset="0.55" stop-color="#2ec4c4"/><stop offset="1" stop-color="#62e36a"/></linearGradient>
   <linearGradient id="eg2" x1="0" y1="0" x2="0.6" y2="1"><stop offset="0" stop-color="#1e8fe6"/><stop offset="1" stop-color="#0d6fd0"/></linearGradient>
   <linearGradient id="fd" x1="0" y1="0" x2="0" y2="1"><stop offset="0" stop-color="#fed871"/><stop offset="1" stop-color="#f8c640"/></linearGradient>
   <linearGradient id="ph" x1="0" y1="0" x2="1" y2="1"><stop offset="0" stop-color="#25b0ec"/><stop offset="0.5" stop-color="#30aaea"/><stop offset="1" stop-color="#a08ee8"/></linearGradient>
  </defs>
  <!-- windows -->
  <g fill="#fff">
   <path d="M24 1010.5 L34.8 1009 V1019.3 H24 Z"/><path d="M36 1008.8 L48 1007 V1019.3 H36 Z"/>
   <path d="M24 1020.6 H34.8 V1031 L24 1029.5 Z"/><path d="M36 1020.6 H48 V1032.8 L36 1031.2 Z"/>
  </g>
  <!-- edge -->
  <circle cx="113" cy="1020" r="18" fill="url(#eg1)"/>
  <path d="M95 1020 C95.5 1013 102 1010.5 108 1011 C114 1011.5 117.5 1015.5 117 1019.5 L116.5 1022 C119 1025.5 124 1026 128.3 1025.2 L128.8 1029.5 A18 18 0 0 1 95 1020 Z" fill="url(#eg2)"/>
  <path d="M105.5 1019.5 C105 1027 107 1034 112 1038 A18 18 0 0 0 128.2 1029.4 C121 1030.5 115 1028.5 111 1024.5 C109 1022 108.8 1018.5 110.5 1016.3 C108 1016 106 1017 105.5 1019.5 Z" fill="#0f52a8"/>
  <ellipse cx="113.3" cy="1019.8" rx="4.3" ry="4.6" fill="#233a43"/>
  <path d="M116.8 1020 C117.5 1025 123 1026.5 128.3 1025.3 C129.3 1026.5 128.9 1028.3 128 1029.3 C121 1030 115.5 1028 113 1023.4 Z" fill="#233a43"/>
  <!-- explorer -->
  <path d="M172 1009 a2 2 0 0 1 2 -2 H184.5 L187 1009.5 H202.1 a2 2 0 0 1 2 2 V1030.2 a2 2 0 0 1 -2 2 H174 a2 2 0 0 1 -2 -2 Z" fill="#e3a312"/>
  <path d="M172 1011.8 H185 L187.5 1009.8 H202.1 a2 2 0 0 1 2 2 V1030.2 a2 2 0 0 1 -2 2 H174 a2 2 0 0 1 -2 -2 Z" fill="url(#fd)"/>
  <path d="M177.4 1033.2 V1022.5 a1.5 1.5 0 0 1 1.5 -1.5 H196.4 a1.5 1.5 0 0 1 1.5 1.5 V1033.2 H192.9 V1026 H182.8 V1033.2 Z" fill="#3d96e2"/>
  <!-- outlook -->
  <path d="M252.8 1006 a2 2 0 0 1 2 -2 H278 a2 2 0 0 1 2 2 V1020 H252.8 Z" fill="#0a64b8"/>
  <rect x="263" y="1008.5" width="8" height="6" fill="#28a8ea"/><rect x="271" y="1008.5" width="8.9" height="6" fill="#50d9ff"/>
  <rect x="263" y="1014.5" width="8" height="6" fill="#0078d4"/><rect x="271" y="1014.5" width="8.9" height="6" fill="#28a8ea"/>
  <path d="M252.8 1021 L266 1030 L280 1020.5 V1034 a2 2 0 0 1 -2 2 H254.8 a2 2 0 0 1 -2 -2 Z" fill="#1490df"/>
  <path d="M252.8 1036 L280 1022 V1034 a2 2 0 0 1 -2 2 Z" fill="#28a8ea" opacity="0.7"/>
  <rect x="245" y="1010.9" width="18" height="18" rx="1.6" fill="#0f6cbd"/>
  <ellipse cx="254" cy="1019.9" rx="4.3" ry="5" fill="none" stroke="#fff" stroke-width="2.2"/>
  <!-- bars app -->
  <g fill="#4a5ae8">
   <path d="M320.1 1024.8 L329.4 1020.9 V1037.2 H321.3 a1.2 1.2 0 0 1 -1.2 -1.2 Z"/>
   <path d="M329 1030.2 H334 V1032.5 H329 Z"/>
   <path d="M333.3 1015.9 L342.2 1012 V1036 a1.2 1.2 0 0 1 -1.2 1.2 H333.3 Z"/>
   <path d="M346.1 1008.9 L356.1 1004.7 V1013.6 H346.1 Z"/>
   <path d="M346.1 1015.9 H356.1 V1036 a1.2 1.2 0 0 1 -1.2 1.2 H347.3 a1.2 1.2 0 0 1 -1.2 -1.2 Z"/>
  </g>
  <!-- chrome -->
  <circle cx="413.2" cy="1020" r="18.1" fill="#ea4335"/>
  <path d="M413.2 1020 L429 1011 A18.1 18.1 0 0 1 413.2 1038.1 Z" fill="#fbbc04"/>
  <path d="M413.2 1020 L413.2 1038.1 A18.1 18.1 0 0 1 397.4 1011.2 Z" fill="#34a853"/>
  <path d="M413.2 1011.1 H429 L413.2 1020 Z" fill="#fbbc04"/>
  <path d="M397.4 1011.2 L413.2 1020 L404.5 1024.5 Z" fill="#ea4335"/>
  <path d="M413.2 1038.1 L421 1024.5 L413.2 1020 Z" fill="#34a853"/>
  <path d="M413.2 1020 L421.5 1024.2 L413.2 1038.1 Z" fill="#fbbc04" opacity="0"/>
  <circle cx="413.2" cy="1020" r="8.9" fill="#fff"/>
  <circle cx="413.2" cy="1020" r="7.2" fill="#3b7ff0"/>
  <!-- word -->
  <path d="M478.3 1006 a2 2 0 0 1 2 -2 H503.4 a2 2 0 0 1 2 2 V1012 H478.3 Z" fill="#41a5ee"/>
  <rect x="478.3" y="1012" width="27.1" height="7.8" fill="#2b7cd3"/>
  <rect x="478.3" y="1019.8" width="27.1" height="7.7" fill="#185abd"/>
  <path d="M478.3 1027.5 H505.4 V1034 a2 2 0 0 1 -2 2 H480.3 a2 2 0 0 1 -2 -2 Z" fill="#103f91"/>
  <rect x="470.1" y="1010.9" width="18" height="18" rx="1.6" fill="#185abd"/>
  <path d="M472.6 1015 L475 1025 L478.8 1016.5 L482.6 1025 L485 1015" fill="none" stroke="#fff" stroke-width="2" stroke-linejoin="miter"/>
  <!-- photos -->
  <rect x="547.1" y="1003.7" width="32" height="32.3" rx="2" fill="url(#ph)"/>
  <path d="M565.5 1023 L568 1020 L579.1 1029.5 V1034 a2 2 0 0 1 -2 2 H570 Z" fill="#4a68d0"/>
  <path d="M547.1 1023.8 L555.5 1016.2 a2 2 0 0 1 2.8 0 L579.1 1035.5 a1 1 0 0 1 -1 0.5 H549.1 a2 2 0 0 1 -2 -2 Z" fill="#174a8c"/>
  <circle cx="568" cy="1012" r="3" fill="#f2f2f0"/>
  <!-- tray -->
  <g fill="none" stroke="#fff" stroke-width="1.6">
   <path d="M1207.7 1008.4 H1237.8 V1031.1 H1209.7 a2 2 0 0 1 -2 -2 Z"/>
   <path d="M1237.8 1011.8 H1242 V1029.1 a2 2 0 0 1 -2 2 H1237.8"/>
   <rect x="1212.6" y="1018.9" width="9.6" height="8.5"/>
   <path d="M1211.5 1012.6 H1234 M1211.5 1015.6 H1234 M1225.5 1021.4 H1234 M1225.5 1026.6 H1234"/>
   <path d="M1409.2 1023.8 L1418 1015 L1426.8 1023.8" stroke-width="1.3"/>
  </g>
  <path d="M1617.8 1007.9 H1642.1 V1027.3 H1626.5 L1621.5 1031.3 V1027.3 H1617.8 Z" fill="#fff"/>
  <path d="M1622.9 1013.8 H1637 M1622.9 1017.1 H1637 M1622.9 1021.1 H1631.4" stroke="#1c2845" stroke-width="1.1"/>
  <circle cx="1641.5" cy="1031.3" r="11.6" fill="#2b2f38" stroke="#777" stroke-width="1.3"/>
  <text x="1641.8" y="1037.8" font-size="16.5" font-weight="bold" fill="#fff" text-anchor="middle" font-family="Liberation Sans">1</text>
  <rect x="1671.8" y="990" width="1.8" height="60" fill="#8894a2"/>
  <!-- fa -->
  <g fill="none" stroke="#fff" stroke-width="1.5">
   <path d="M1464.4 1014.2 V1024.3 a2 2 0 0 0 2 2 H1471.5"/>
   <ellipse cx="1471.7" cy="1022.5" rx="2.6" ry="3.7"/>
  </g>
  <rect x="1470" y="1016" width="2.4" height="1.2" fill="#fff"/>
 </svg>
 <div class="a" style="left:1255px;top:18px;color:#fff;font-size:21px;line-height:26px;white-space:nowrap;letter-spacing:-0.35px">2°C&nbsp;&nbsp;Cloudy</div>
 <div class="a" style="left:1515px;top:7px;color:#fff;font-size:18px;line-height:20px;white-space:nowrap;letter-spacing:-0.12px">3:24 PM</div>
 <div class="a" style="left:1506px;top:35px;color:#fff;font-size:18px;line-height:20px;white-space:nowrap;letter-spacing:0.72px">3/11/2025</div>
</div>
<div class="a" style="left:1515.5px;top:468px;width:87px;height:61px;border-radius:5px;background:#262626;border:1px solid #1c1c1c"></div>
<div class="a" style="left:1528.5px;top:483px;color:#979797;font-size:29px;line-height:34px">Next</div>
<div class="a" style="left:1638px;top:495px;width:30px;height:72px;border-radius:5px;background:#262626"></div>
<svg class="ic" style="left:1638px;top:495px" width="30" height="72" viewBox="0 0 30 72"><path d="M5.5 23 a1.5 1.5 0 0 1 2.3 -1.3 L24.5 33.5 a1.5 1.5 0 0 1 0 2.5 L7.8 47.8 a1.5 1.5 0 0 1 -2.3 -1.3 Z" fill="#8c8c8c" stroke="#8c8c8c" stroke-width="2" stroke-linejoin="round"/></svg>

</body></html>
